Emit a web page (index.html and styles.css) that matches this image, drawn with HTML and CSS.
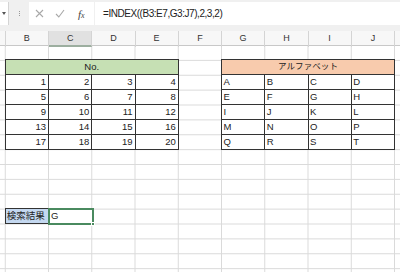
FILE: index.html
```html
<!DOCTYPE html>
<html lang="ja">
<head>
<meta charset="utf-8">
<link rel="stylesheet" href="styles.css">
</head>
<body>
<div class="app">
  <div class="toolbar">
    <div class="namebox"><span class="arrow"></span></div>
    <div class="grip"><span></span><span></span><span></span></div>
    <div class="fxbox">
      <svg class="ic" width="9" height="9" viewBox="0 0 9 9"><path d="M1 1L8 8M8 1L1 8" stroke="#a8a8a8" stroke-width="1.1" fill="none"/></svg>
      <svg class="ic" width="10" height="9" viewBox="0 0 10 9"><path d="M1 5L3.8 8L9 1" stroke="#a8a8a8" stroke-width="1.1" fill="none"/></svg>
      <span class="fx">f<span class="x">x</span></span>
    </div>
    <div class="formula">=INDEX((B3:E7,G3:J7),2,3,2)</div>
  </div>
  <div class="colheads">
    <div class="ch rh"></div>
    <div class="ch">B</div>
    <div class="ch sel-col">C</div>
    <div class="ch">D</div>
    <div class="ch">E</div>
    <div class="ch">F</div>
    <div class="ch">G</div>
    <div class="ch">H</div>
    <div class="ch">I</div>
    <div class="ch">J</div>
    <div class="ch"></div>
  </div>
  <div class="sheet">
    <div class="tbl t-num">
      <div class="c hd green">No.</div>
      <div class="c n">1</div><div class="c n">2</div><div class="c n">3</div><div class="c n">4</div>
      <div class="c n">5</div><div class="c n">6</div><div class="c n">7</div><div class="c n">8</div>
      <div class="c n">9</div><div class="c n">10</div><div class="c n">11</div><div class="c n">12</div>
      <div class="c n">13</div><div class="c n">14</div><div class="c n">15</div><div class="c n">16</div>
      <div class="c n">17</div><div class="c n">18</div><div class="c n">19</div><div class="c n">20</div>
    </div>
    <div class="tbl t-abc">
      <div class="c hd orange">アルファベット</div>
      <div class="c s">A</div><div class="c s">B</div><div class="c s">C</div><div class="c s">D</div>
      <div class="c s">E</div><div class="c s">F</div><div class="c s">G</div><div class="c s">H</div>
      <div class="c s">I</div><div class="c s">J</div><div class="c s">K</div><div class="c s">L</div>
      <div class="c s">M</div><div class="c s">N</div><div class="c s">O</div><div class="c s">P</div>
      <div class="c s">Q</div><div class="c s">R</div><div class="c s">S</div><div class="c s">T</div>
    </div>
    <div class="lbl">検索結果</div>
    <div class="result">G<span class="handle"></span></div>
  </div>
</div>
</body>
</html>
```
FILE: styles.css
```css
html, body {
  margin: 0;
  padding: 0;
  background: #ffffff;
}
.app {
  width: 400px;
  height: 272px;
  overflow: hidden;
  font-family: "Liberation Sans", "Noto Sans CJK JP", sans-serif;
  color: #222;
}
.toolbar {
  height: 31px;
  background: #f0f0f0;
  display: flex;
  align-items: flex-start;
  padding-top: 2px;
  box-sizing: border-box;
}
.namebox {
  width: 9px;
  height: 23px;
  background: #fff;
  border-right: 1px solid #d4d4d4;
  display: flex;
  align-items: center;
  justify-content: flex-end;
  padding-right: 2px;
  box-sizing: border-box;
}
.arrow {
  width: 0;
  height: 0;
  border-left: 2.5px solid transparent;
  border-right: 2.5px solid transparent;
  border-top: 3px solid #555;
}
.grip {
  width: 20px;
  height: 23px;
  display: flex;
  flex-direction: column;
  align-items: center;
  justify-content: center;
  gap: 1px;
}
.grip span {
  width: 1px;
  height: 1px;
  background: #999;
}
.fxbox {
  width: 65px;
  height: 23px;
  background: #fff;
  display: flex;
  align-items: center;
  box-sizing: border-box;
  padding-left: 6px;
  gap: 11px;
}
.fx {
  font-family: "Liberation Serif", serif;
  font-style: italic;
  font-size: 11px;
  color: #444;
  margin-left: 2px;
}
.fx .x {
  font-size: 8px;
}
.formula {
  flex: 1;
  height: 23px;
  margin-left: 1px;
  background: #fff;
  font-size: 10px;
  letter-spacing: -0.45px;
  line-height: 23px;
  padding-left: 8px;
  white-space: nowrap;
  color: #222;
}
.colheads {
  display: grid;
  grid-template-columns: 5.75px repeat(10, 43.25px);
  height: 14.5px;
  background: #f7f7f7;
  border-bottom: 1px solid #c8c8c8;
  box-sizing: border-box;
}
.ch {
  border-right: 1px solid #d4d4d4;
  font-size: 9px;
  line-height: 14px;
  text-align: center;
  color: #333;
}
.ch.sel-col {
  background: #e1e1e1;
  border-bottom: 2px solid #9cae9f;
}
.sheet {
  display: grid;
  grid-template-columns: 5.75px repeat(10, 43.25px);
  grid-template-rows: repeat(16, 14.88px);
  background-color: #fff;
  background-image:
    linear-gradient(to right, transparent calc(100% - 1px), #dadada calc(100% - 1px)),
    linear-gradient(to bottom, transparent calc(100% - 1px), #dadada calc(100% - 1px));
  background-size: 43.25px 100%, 100% 14.88px;
  background-position: 5.75px 0, 0 0;
  margin-top: 0;
}
.tbl {
  margin: -1px 0 0 -1px;
  display: grid;
  grid-template-columns: repeat(4, 1fr);
  grid-template-rows: repeat(6, 1fr);
  border-left: 1px solid #333;
  border-top: 1px solid #333;
  background: #fff;
}
.t-num {
  grid-column: 2 / 6;
  grid-row: 2 / 8;
}
.t-abc {
  grid-column: 7 / 11;
  grid-row: 2 / 8;
}
.c {
  border-right: 1px solid #333;
  border-bottom: 1px solid #333;
  font-size: 9.5px;
  line-height: 13.88px;
  white-space: nowrap;
  overflow: hidden;
}
.c.hd {
  grid-column: 1 / -1;
  text-align: center;
}
.green {
  background: #c6e0b4;
}
.orange {
  background: #f8cbad;
  font-size: 8.5px;
  letter-spacing: 0.1px;
}
.c.n {
  text-align: right;
  padding-right: 2px;
}
.c.s {
  text-align: left;
  padding-left: 1.5px;
}
.lbl {
  grid-column: 2;
  grid-row: 12;
  margin: -1px 0 0 -1px;
  border: 1px solid #333;
  border-top-width: 1px;
  background: #c4d8f0;
  font-size: 9.5px;
  line-height: 13px;
  padding-left: 1px;
  white-space: nowrap;
}
.result {
  grid-column: 3;
  grid-row: 12;
  margin: -1px -2px -1px -1px;
  border: 2px solid #4a8a5f;
  position: relative;
  font-size: 9.5px;
  line-height: 12px;
  padding-left: 1px;
  background: #fff;
}
.handle {
  position: absolute;
  right: -3px;
  bottom: -3px;
  width: 4px;
  height: 4px;
  background: #4a8a5f;
  border: 1px solid #fff;
  box-sizing: border-box;
}
```
